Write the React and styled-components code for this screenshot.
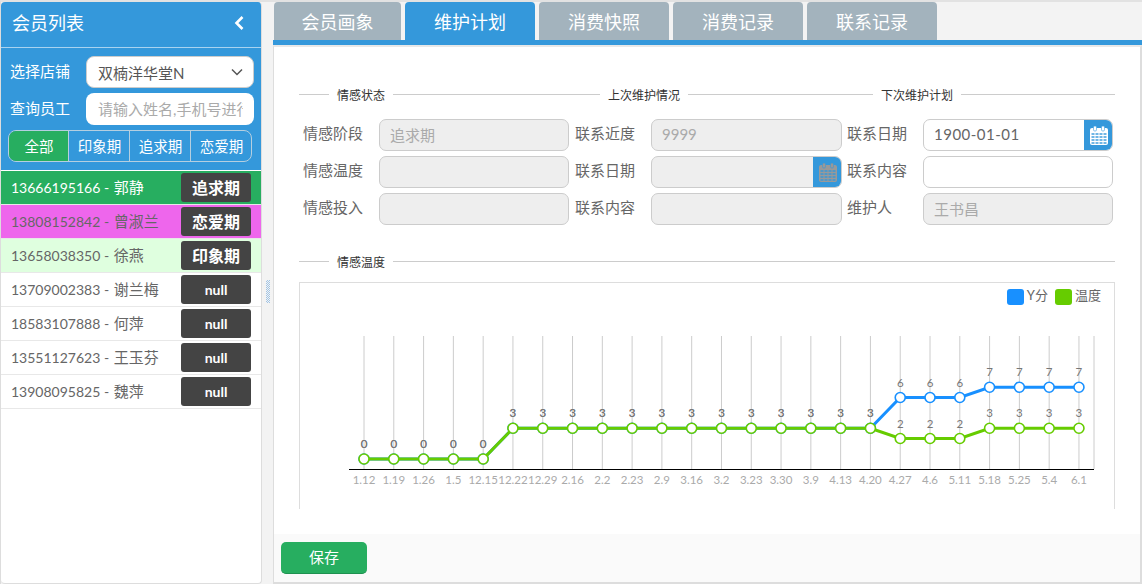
import React from "react";
import styled, { createGlobalStyle } from "styled-components";

const Global = createGlobalStyle`
  html, body { margin: 0; padding: 0; }
  body { font-family: "Lato", "Noto Sans CJK SC", sans-serif; color: #555; overflow: hidden; }
  * { box-sizing: border-box; }
`;

const Page = styled.div`
  width: 1142px; height: 584px; display: flex;
  background: #f3f3f3; border-top: 2px solid #e2e2e2; border-left: 1px solid #ddd; overflow: hidden;
`;
const Sidebar = styled.aside`
  width: 261px; height: 582px; background: #fff; display: flex; flex-direction: column;
  border-right: 1px solid #ddd; border-bottom: 1px solid #ddd;
  border-radius: 4px; overflow: hidden; flex: none;
`;
const SideHead = styled.div`
  height: 46px; background: #3498db; border-bottom: 1px solid #a9d3f0; color: #fff;
  display: flex; align-items: center; justify-content: space-between; padding: 0 16px 4px 11px;
  font-size: 18px; flex: none;
`;
const HeadTitle = styled.span` margin-bottom: 2px; `;
const Filters = styled.div`
  background: #3498db; height: 123px; padding: 8px 7px 0 8px; flex: none;
  border-bottom: 1px solid #fff; display: flex; flex-direction: column;
`;
const FilterRow = styled.div`
  display: flex; align-items: center; height: 32px; margin-bottom: 5px; color: #fff; font-size: 15px;
`;
const FilterLabel = styled.span` width: 77px; padding-left: 1px; flex: none; margin-bottom: 4px; `;
const SelectBox = styled.div`
  width: 168px; height: 32px; background: #fff; border: 1px solid #ccc; border-radius: 8px;
  display: flex; align-items: center; justify-content: space-between; padding: 0 10px 0 11px;
  color: #555; font-size: 15px;
`;
const SearchInput = styled.input`
  width: 168px; height: 32px; background: #fff; border: 0; border-radius: 8px; padding: 0 11px 0 12px;
  font: inherit; outline: none;
  &::placeholder { color: #aaa; opacity: 1; }
`;
const Segments = styled.div`
  width: 244px; height: 32px; margin-left: -1px; border: 1px solid #b5cfe0; border-radius: 8px; overflow: hidden;
  display: grid; grid-template-columns: 59px 61px 61px 61px; flex: none;
`;
const Segment = styled.div`
  display: flex; align-items: center; justify-content: center; color: #fff; font-size: 14.5px; padding: 0 0 2px 1px;
  background: ${p => (p.$active ? "#27ae60" : "transparent")};
  & + & { border-left: 1px solid #b5cfe0; }
`;
const MemberList = styled.div` display: flex; flex-direction: column; `;
const Member = styled.div`
  height: 34px; flex: none; display: flex; align-items: center; justify-content: space-between;
  padding: 0 10px 1px 10px; border-bottom: 1px solid #e8e8e8;
  background: ${p => p.$bg || "#fff"}; color: ${p => p.$fg || "#666"};
  font-size: 14px; white-space: nowrap;
`;
const MemberText = styled.span` margin-bottom: 2px; `;
const MemberName = styled.span` font-size: 15px; margin-left: 1px; `;
const Badge = styled.span`
  width: 70px; height: 29px; border-radius: 3px; background: #444; color: #fff; font-weight: 700;
  font-size: ${p => (p.$latin ? "14px" : "16px")};
  display: flex; align-items: center; justify-content: center;
`;
const Splitter = styled.div`
  width: 11px; flex: none; display: flex; align-items: center; justify-content: center; padding-left: 1px;
`;
const Grip = styled.div`
  width: 4px; height: 23px; margin-top: -3px; flex: none;
  background-image: repeating-conic-gradient(#a0c4e6 0 25%, transparent 0 50%);
  background-size: 2px 2px;
`;
const Main = styled.main`
  flex: 1; min-width: 0; height: 582px; display: flex; flex-direction: column;
`;
const Tabs = styled.div` display: flex; gap: 4px; height: 38px; flex: none; padding-left: 1px; `;
const Tab = styled.div`
  width: ${p => (p.$first ? "127px" : "130px")};
  border-radius: 4px 4px 0 0; color: #fff; font-size: 18px;
  background: ${p => (p.$active ? "#3498db" : "#a3b3bd")};
  display: flex; align-items: center; justify-content: center; padding-bottom: 1px;
`;
const Strip = styled.div` height: 5px; background: #3498db; flex: none; `;
const Content = styled.div`
  flex: 1; min-height: 0; background: #fff; display: flex; flex-direction: column;
  border-top: 2px solid #e8e8e8; border-left: 1px solid #ddd; border-right: 2px solid #ddd; border-bottom: 2px solid #ddd;
`;
const Body = styled.div` flex: 1; padding: 39px 25px 0 25px; min-height: 0; `;
const TitleRow = styled.div`
  display: flex; align-items: center; height: 16px; font-size: 12px; color: #333; white-space: nowrap;
`;
const Rule = styled.span`
  height: 1px; background: #ccc; flex: ${p => (p.$w ? `0 0 ${p.$w}px` : 1)};
`;
const TitleText = styled.span` padding: 0 8px; `;
const FormGrid = styled.div`
  display: grid; grid-template-columns: repeat(3, 272px); row-gap: 5px; margin-top: 17px; padding-left: 3px;
`;
const Field = styled.div` display: flex; align-items: center; height: 32px; font-size: 15px; color: #666; `;
const FieldLabel = styled.span` width: 77px; padding-left: 1px; flex: none; margin-bottom: 5px; `;
const InputWrap = styled.div`
  width: ${p => (p.$wide ? "191px" : "190px")};
  height: 32px; position: relative; border: 1px solid #ccc; border-radius: 7px; overflow: hidden;
  background: ${p => (p.$disabled ? "#eee" : "#fff")};
  color: ${p => (p.$disabled ? "#aaa" : "#666")};
  display: flex; align-items: center; font-size: 15px;
  padding: 0 0 2px 10px;
`;
const DateText = styled.span` letter-spacing: 0.5px; `;
const CalBtn = styled.span`
  position: absolute; right: -1px; top: -1px; bottom: -1px; width: 29px; background: #3498db;
  display: flex; align-items: center; justify-content: center;
`;
const ChartTitle = styled(TitleRow)` margin-top: 28px; `;
const ChartBox = styled.div`
  margin-top: 13px; height: 227px; position: relative; width: 816px;
  border: 1px solid #ddd; border-bottom: 0;
`;
const Legend = styled.div`
  position: absolute; right: 13px; top: 5px; height: 18px; display: flex; align-items: center; font-size: 13px; color: #666;
`;
const Swatch = styled.span`
  width: 17px; height: 16px; border-radius: 3px; background: ${p => p.$c}; margin-right: 3px;
`;
const LegendText = styled.span`
  margin: 0 7px 3px 0; line-height: 15px;
  &:last-child { margin-right: 0; }
`;
const ChartSvg = styled.svg` position: absolute; left: -1px; top: -1px; display: block; `;
const Footer = styled.div`
  height: 48px; flex: none; background: #fafafa; padding: 8px 7px;
`;
const SaveBtn = styled.button`
  width: 86px; height: 32px; border: 0; border-bottom: 1px solid #1f9150; border-radius: 5px;
  background: #27ae60; color: #fff; font: inherit; font-size: 15px; padding: 0 0 2px;
`;

const Calendar = ({ color }) => (
  <svg width="18" height="19" viewBox="0 0 18 19">
    <rect x="0" y="2" width="18" height="17" rx="2" fill={color} />
    <rect x="3.5" y="0" width="3" height="5" rx="1.2" fill={color} stroke="#3498db" strokeWidth="0.6" />
    <rect x="11.5" y="0" width="3" height="5" rx="1.2" fill={color} stroke="#3498db" strokeWidth="0.6" />
    <g fill="#3498db" opacity="0.7">
      {[7, 10, 13, 16].flatMap(y =>
        [1.5, 5.5, 9.5, 13.5].map(x => <rect key={`${x}-${y}`} x={x} y={y} width="3" height="2" />)
      )}
    </g>
  </svg>
);

const members = [
  { t: "13666195166 - ", n: "郭静", b: "追求期", bg: "#27ae60", fg: "#fff" },
  { t: "13808152842 - ", n: "曾淑兰", b: "恋爱期", bg: "#ee66ec", fg: "#666" },
  { t: "13658038350 - ", n: "徐燕", b: "印象期", bg: "#dfffdf", fg: "#666" },
  { t: "13709002383 - ", n: "谢兰梅", b: "null" },
  { t: "18583107888 - ", n: "何萍", b: "null" },
  { t: "13551127623 - ", n: "王玉芬", b: "null" },
  { t: "13908095825 - ", n: "魏萍", b: "null" },
];

const xLabels = ["1.12","1.19","1.26","1.5","12.15","12.22","12.29","2.16","2.2","2.23","2.9","3.16","3.2","3.23","3.30","3.9","4.13","4.20","4.27","4.6","5.11","5.18","5.25","5.4","6.1"];
const temp = [0,0,0,0,0,3,3,3,3,3,3,3,3,3,3,3,3,3,2,2,2,3,3,3,3];
const score = [0,0,0,0,0,3,3,3,3,3,3,3,3,3,3,3,3,3,6,6,6,7,7,7,7];
const X0 = 65, DX = 29.79, Y0 = 177, DY = 10.25;
const px = i => X0 + i * DX;
const py = v => Y0 - v * DY;

const Series = ({ data, color }) => (
  <g>
    <polyline points={data.map((v, i) => `${px(i)},${py(v)}`).join(" ")} fill="none" stroke={color} strokeWidth="3" />
    {data.map((v, i) => (
      <circle key={i} cx={px(i)} cy={py(v)} r="5" fill="#fff" stroke={color} strokeWidth="1.6" />
    ))}
    {data.map((v, i) => (
      <text key={i} x={px(i)} y={py(v) - 11} textAnchor="middle" fontSize="11.5" fill="#777">{v}</text>
    ))}
  </g>
);

const Chart = () => (
  <ChartSvg width="816" height="227" viewBox="0 0 816 227" fontFamily="Lato, sans-serif">
    {xLabels.map((_, i) => (
      <line key={i} x1={px(i)} x2={px(i)} y1="54" y2="187" stroke="#ccc" />
    ))}
    <line x1="795" x2="795" y1="54" y2="187" stroke="#ccc" />
    <line x1="50" x2="795" y1="187.5" y2="187.5" stroke="#000" />
    {xLabels.map((l, i) => (
      <text key={l} x={px(i)} y="202" textAnchor="middle" fontSize="11.5" fill="#aaa">{l}</text>
    ))}
    <Series data={score} color="#1890ff" />
    <Series data={temp} color="#66cc00" />
  </ChartSvg>
);

const Section = ({ title, w }) => (
  <>
    <Rule $w={w} />
    <TitleText>{title}</TitleText>
  </>
);

export default function App() {
  return (
    <>
      <Global />
      <Page>
        <Sidebar>
          <SideHead>
            <HeadTitle>会员列表</HeadTitle>
            <svg width="12" height="16" viewBox="0 0 12 16">
              <path d="M9.5 2 L3.5 8 L9.5 14" fill="none" stroke="#fff" strokeWidth="2.6" />
            </svg>
          </SideHead>
          <Filters>
            <FilterRow>
              <FilterLabel>选择店铺</FilterLabel>
              <SelectBox>
                <span>双楠洋华堂N</span>
                <svg width="12" height="8" viewBox="0 0 12 8">
                  <path d="M1 1.5 L6 6.5 L11 1.5" fill="none" stroke="#555" strokeWidth="1.5" />
                </svg>
              </SelectBox>
            </FilterRow>
            <FilterRow>
              <FilterLabel>查询员工</FilterLabel>
              <SearchInput placeholder="请输入姓名,手机号进行查询" readOnly />
            </FilterRow>
            <Segments>
              <Segment $active>全部</Segment>
              <Segment>印象期</Segment>
              <Segment>追求期</Segment>
              <Segment>恋爱期</Segment>
            </Segments>
          </Filters>
          <MemberList>
            {members.map(m => (
              <Member key={m.t} $bg={m.bg} $fg={m.fg}>
                <MemberText>{m.t}<MemberName>{m.n}</MemberName></MemberText>
                <Badge $latin={m.b === "null"}>{m.b}</Badge>
              </Member>
            ))}
          </MemberList>
        </Sidebar>
        <Splitter><Grip /></Splitter>
        <Main>
          <Tabs>
            <Tab $first>会员画象</Tab>
            <Tab $active>维护计划</Tab>
            <Tab>消费快照</Tab>
            <Tab>消费记录</Tab>
            <Tab>联系记录</Tab>
          </Tabs>
          <Strip />
          <Content>
            <Body>
              <TitleRow>
                <Section title="情感状态" w={30} />
                <Section title="上次维护情况" w={207} />
                <Section title="下次维护计划" w={185} />
                <Rule />
              </TitleRow>
              <FormGrid>
                <Field><FieldLabel>情感阶段</FieldLabel><InputWrap $disabled>追求期</InputWrap></Field>
                <Field><FieldLabel>联系近度</FieldLabel><InputWrap $disabled $wide>9999</InputWrap></Field>
                <Field><FieldLabel>联系日期</FieldLabel><InputWrap><DateText>1900-01-01</DateText><CalBtn><Calendar color="#fff" /></CalBtn></InputWrap></Field>
                <Field><FieldLabel>情感温度</FieldLabel><InputWrap $disabled /></Field>
                <Field><FieldLabel>联系日期</FieldLabel><InputWrap $disabled $wide><CalBtn><Calendar color="#999" /></CalBtn></InputWrap></Field>
                <Field><FieldLabel>联系内容</FieldLabel><InputWrap /></Field>
                <Field><FieldLabel>情感投入</FieldLabel><InputWrap $disabled /></Field>
                <Field><FieldLabel>联系内容</FieldLabel><InputWrap $disabled $wide /></Field>
                <Field><FieldLabel>维护人</FieldLabel><InputWrap $disabled>王书昌</InputWrap></Field>
              </FormGrid>
              <ChartTitle>
                <Section title="情感温度" w={30} />
                <Rule />
              </ChartTitle>
              <ChartBox>
                <Chart />
                <Legend>
                  <Swatch $c="#1890ff" /><LegendText>Y分</LegendText>
                  <Swatch $c="#66cc00" /><LegendText>温度</LegendText>
                </Legend>
              </ChartBox>
            </Body>
            <Footer><SaveBtn>保存</SaveBtn></Footer>
          </Content>
        </Main>
      </Page>
    </>
  );
}
